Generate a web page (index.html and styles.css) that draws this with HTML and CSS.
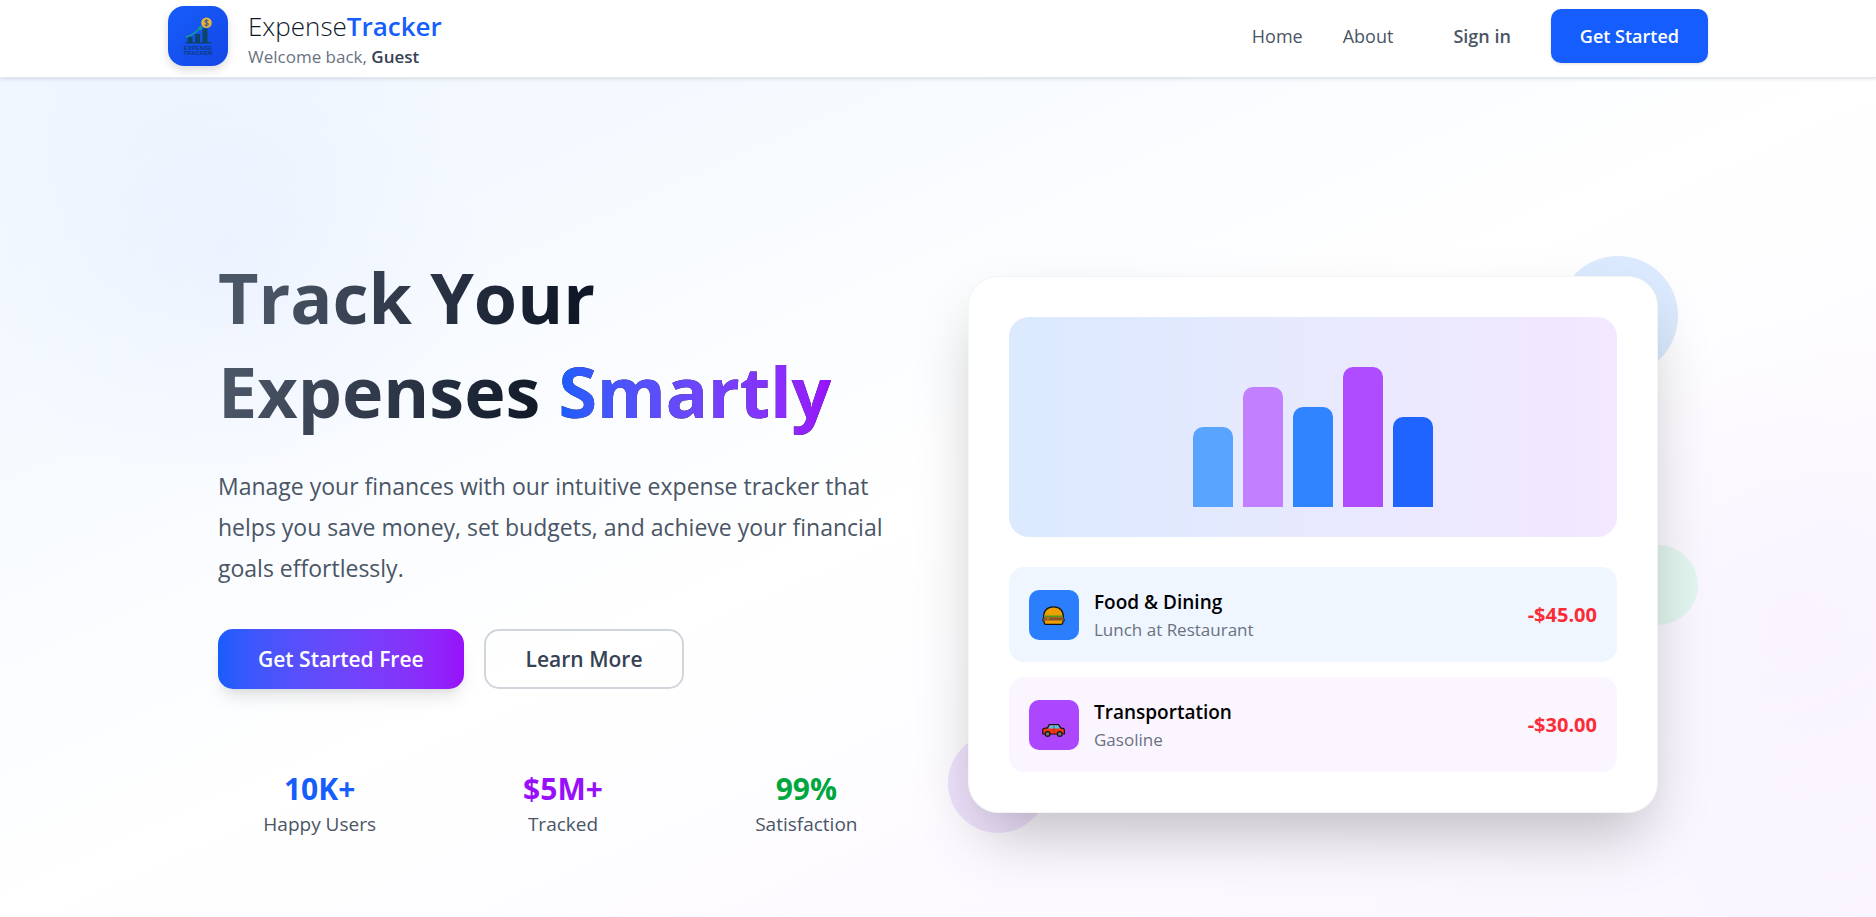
FILE: index.html
```html
<!DOCTYPE html>
<html lang="en">
<head>
<meta charset="utf-8">
<meta name="viewport" content="width=device-width, initial-scale=1">
<title>ExpenseTracker</title>
<link rel="stylesheet" href="styles.css">
</head>
<body>
<header class="site-header">
  <div class="header-inner">
    <a class="brand" href="#">
      <svg class="brand-logo" viewBox="0 0 60 60" aria-hidden="true">
        <g fill="#0c4566">
          <rect x="19.5" y="31" width="5" height="6"/>
          <rect x="27" y="28" width="5" height="9"/>
          <rect x="34.5" y="22.5" width="5" height="14.5"/>
          <rect x="17.5" y="36.3" width="26.5" height="1.2"/>
        </g>
        <path d="M18 31.200Q27 28 32 22" fill="none" stroke="#169b8f" stroke-width="1.500"/>
        <path d="M29.500 21.500L34.500 19.500L33.500 25Z" fill="#169b8f"/>
        <circle cx="38.500" cy="16.800" r="5.300" fill="#e8b53c"/>
        <path d="M40.300 15C39.800 13.800 36.800 13.900 36.900 15.500C37 17.200 40.300 16.300 40.300 18.200C40.300 19.900 37.100 19.900 36.700 18.500M38.500 12.900V20.800" fill="none" stroke="#4c6183" stroke-width="1.100"/>
        <text class="logo-text" x="30" y="43.500">EXPENSE</text>
        <text class="logo-text" x="30" y="49">TRACKER</text>
      </svg>
      <span class="brand-copy">
        <span class="brand-name">Expense<b>Tracker</b></span>
        <span class="brand-greeting">Welcome back, <b>Guest</b></span>
      </span>
    </a>
    <nav class="site-nav">
      <a class="nav-link" href="#">Home</a>
      <a class="nav-link" href="#">About</a>
      <a class="nav-link nav-signin" href="#">Sign in</a>
      <a class="nav-cta" href="#">Get Started</a>
    </nav>
  </div>
</header>
<main class="hero">
  <div class="hero-grid">
    <section class="hero-copy">
      <h1 class="hero-title">Track Your<br>Expenses <span class="hero-accent">Smartly</span></h1>
      <p class="hero-lead">Manage your finances with our intuitive expense tracker that helps you save money, set budgets, and achieve your financial goals effortlessly.</p>
      <div class="hero-actions">
        <button class="btn btn-primary" type="button">Get Started Free</button>
        <button class="btn btn-outline" type="button">Learn More</button>
      </div>
      <div class="stats">
        <div class="stat"><strong class="stat-value blue">10K+</strong><span class="stat-label">Happy Users</span></div>
        <div class="stat"><strong class="stat-value purple">$5M+</strong><span class="stat-label">Tracked</span></div>
        <div class="stat"><strong class="stat-value green">99%</strong><span class="stat-label">Satisfaction</span></div>
      </div>
    </section>
    <section class="preview">
      <span class="bubble bubble-blue"></span>
      <span class="bubble bubble-purple"></span>
      <span class="bubble bubble-green"></span>
      <div class="card">
        <div class="chart">
          <span class="bar bar-1"></span>
          <span class="bar bar-2"></span>
          <span class="bar bar-3"></span>
          <span class="bar bar-4"></span>
          <span class="bar bar-5"></span>
        </div>
        <div class="entries">
          <div class="entry entry-food">
            <svg class="entry-icon" viewBox="0 0 50 50" aria-hidden="true">
              <path d="M14.500 28C14.500 20.500 18.500 16.800 24.500 16.800S34.500 20.500 34.500 28L35.200 30.500L33.800 31.500V33Q33.800 34.300 32 34.300H17Q15.200 34.300 15.200 33V31.500L13.800 30.500Z" fill="#eda100" stroke="#17130d" stroke-width="1.200" stroke-linejoin="round"/>
              <path d="M15.200 25.600H33.800V27H15.200Z" fill="#4f9a20"/>
              <path d="M14.500 27.200H34.500L34.800 30.600H14.200Z" fill="#8b5028"/>
              <path d="M17 28.200H21L19 29.600Z" fill="#d99a2b"/>
            </svg>
            <div class="entry-copy"><span class="entry-title">Food &amp; Dining</span><span class="entry-note">Lunch at Restaurant</span></div>
            <span class="entry-amount">-$45.00</span>
          </div>
          <div class="entry entry-transport">
            <svg class="entry-icon" viewBox="0 0 50 50" aria-hidden="true">
              <path d="M13.800 34V29.500Q13.800 28.600 15 28.300L18.500 27.800L20.200 24.600H29.500L31.700 27.800L34.500 28.600Q35.400 29 35.400 30V34Z" fill="#f03a17" stroke="#17130d" stroke-width="1.200" stroke-linejoin="round"/>
              <path d="M19.500 28.500L21 25.300H29L30.800 28.500Z" fill="#4cc2f1"/>
              <path d="M24.900 25.300V31.500" stroke="#a82a15" stroke-width=".8"/>
              <circle cx="18.600" cy="34" r="2.400" fill="#777" stroke="#17130d" stroke-width="1.200"/>
              <circle cx="30.800" cy="34" r="2.400" fill="#777" stroke="#17130d" stroke-width="1.200"/>
            </svg>
            <div class="entry-copy"><span class="entry-title">Transportation</span><span class="entry-note">Gasoline</span></div>
            <span class="entry-amount">-$30.00</span>
          </div>
        </div>
      </div>
    </section>
  </div>
</main>
</body>
</html>
```
FILE: styles.css
```css
* { box-sizing: border-box; }

body {
  margin: 0;
  font-family: "Open Sans", "Noto Sans", sans-serif;
  font-size: 19px;
  line-height: 30px;
  color: #000;
  background: #fff;
}

a { color: inherit; text-decoration: none; }

/* Header */
.site-header {
  position: relative;
  z-index: 1;
  background: #fff;
  border-bottom: 1px solid #e2e8f0;
  box-shadow: 0 1px 4px rgba(0, 0, 0, .12);
}
.header-inner {
  display: flex;
  align-items: flex-start;
  justify-content: space-between;
  max-width: 1600px;
  margin: 0 auto;
  padding: 6px 30px 5px;
}
.brand { display: flex; align-items: flex-start; gap: 20px; }
.brand-logo {
  width: 60px;
  height: 60px;
  margin-bottom: 6px;
  border-radius: 16px;
  background: linear-gradient(135deg, #155dfc, #1447e6);
  box-shadow: 0 4px 8px rgba(0, 0, 0, .14);
}
.logo-text {
  font-family: "Liberation Sans", sans-serif;
  font-size: 6px;
  font-weight: 700;
  text-anchor: middle;
  fill: #0c3a80;
}
.brand-copy { display: flex; flex-direction: column; }
.brand-name {
  font-size: 26px;
  font-weight: 300;
  line-height: 40px;
  color: #101828;
}
.brand-name b { font-weight: 600; color: #155dfc; }
.brand-greeting { font-size: 17px; line-height: 22px; color: #6a7282; }
.brand-greeting b { font-weight: 600; color: #364153; }

.site-nav { display: flex; align-items: center; gap: 40px; padding-top: 3px; color: #4a5565; font-size: 18px; }
.nav-signin { margin-left: 20px; font-weight: 600; }
.nav-cta {
  padding: 12px 29px;
  border-radius: 10px;
  background: #155dfc;
  box-shadow: 0 1px 3px rgba(0, 0, 0, .12);
  color: #fff;
  font-weight: 600;
}

/* Hero */
.hero {
  overflow: hidden;
  padding: 172px 80px 78px;
  background:
    radial-gradient(circle at 230px 170px, rgba(190, 205, 255, .15), transparent 260px),
    radial-gradient(circle at calc(100% - 80px) 540px, rgba(235, 220, 255, .18), transparent 300px),
    linear-gradient(to bottom right, #eff6ff, #fff 50%, #faf5ff);
}
.hero-grid {
  display: grid;
  grid-template-columns: 1fr 1fr;
  align-items: center;
  gap: 60px;
  max-width: 1440px;
  margin: 0 auto;
}
.hero-title {
  width: fit-content;
  margin: 0 0 28px;
  font-size: 70px;
  font-weight: 700;
  line-height: 94px;
  color: transparent;
  background: linear-gradient(105deg, #4a5565 8%, #101828 56%);
  background-clip: text;
}
.hero-accent {
  background: linear-gradient(to right in oklab, #155dfc, #9810fa);
  background-clip: text;
}
.hero-lead {
  margin: 0 0 40px;
  font-size: 23px;
  line-height: 41px;
  color: #4a5565;
}
.hero-actions { display: flex; gap: 20px; }
.btn {
  padding: 15px 40px;
  border: 0;
  border-radius: 15px;
  font: 600 21px/30px "Open Sans", "Noto Sans", sans-serif;
}
.btn-primary {
  color: #fff;
  background: linear-gradient(to right in oklab, #155dfc, #9810fa);
  box-shadow: 0 12px 18px -4px rgba(0, 0, 0, .1), 0 5px 8px -5px rgba(0, 0, 0, .1);
}
.btn-outline {
  padding: 13px 40px;
  border: 2px solid #d1d5dc;
  color: #364153;
  background: transparent;
}

.stats {
  display: grid;
  grid-template-columns: repeat(3, 1fr);
  gap: 40px;
  padding-top: 80px;
  text-align: center;
}
.stat { display: flex; flex-direction: column; }
.stat-value { font-size: 30px; line-height: 40px; }
.stat-label { color: #4a5565; }
.blue { color: #155dfc; }
.purple { color: #9810fa; }
.green { color: #00a63e; }

/* Preview card */
.preview { position: relative; }
.card {
  position: relative;
  padding: 40px;
  border: 1px solid #f3f4f6;
  border-radius: 30px;
  background: #fff;
  box-shadow: 0 31px 62px -12px rgba(0, 0, 0, .25);
}
.bubble { position: absolute; border-radius: 50%; }
.bubble-blue { top: -20px; right: -20px; width: 120px; height: 120px; background: #dbeafe; }
.bubble-purple { bottom: -20px; left: -20px; width: 100px; height: 100px; background: #efe3fd; }
.bubble-green { top: 50%; right: -40px; width: 80px; height: 80px; background: #e2f5ee; }

.chart {
  display: flex;
  align-items: flex-end;
  justify-content: center;
  gap: 10px;
  height: 220px;
  padding-bottom: 30px;
  border-radius: 20px;
  background: linear-gradient(to right in oklab, #dbeafe, #f3e8ff);
}
.bar { width: 40px; border-radius: 10px 10px 0 0; }
.bar-1 { height: 80px; background: #58a4ff; }
.bar-2 { height: 120px; background: #c27fff; }
.bar-3 { height: 100px; background: #3184ff; }
.bar-4 { height: 140px; background: #b04cff; }
.bar-5 { height: 90px; background: #1f64ff; }

.entries { display: grid; gap: 15px; margin-top: 30px; }
.entry { display: flex; align-items: center; gap: 15px; padding: 20px; border-radius: 15px; }
.entry-food { background: #eff6ff; }
.entry-transport { background: #faf5ff; }
.entry-icon { width: 50px; height: 50px; border-radius: 10px; }
.entry-food .entry-icon { background: #2b7fff; }
.entry-transport .entry-icon { background: #ad46ff; }
.entry-copy { display: flex; flex: 1; flex-direction: column; }
.entry-title { font-weight: 600; }
.entry-note { font-size: 17px; line-height: 25px; color: #6a7282; }
.entry-amount { font-size: 20px; font-weight: 700; color: #fb2c36; }

@media (max-width: 1100px) {
  .hero { padding: 80px 40px; }
  .hero-grid { grid-template-columns: 1fr; }
}
```
